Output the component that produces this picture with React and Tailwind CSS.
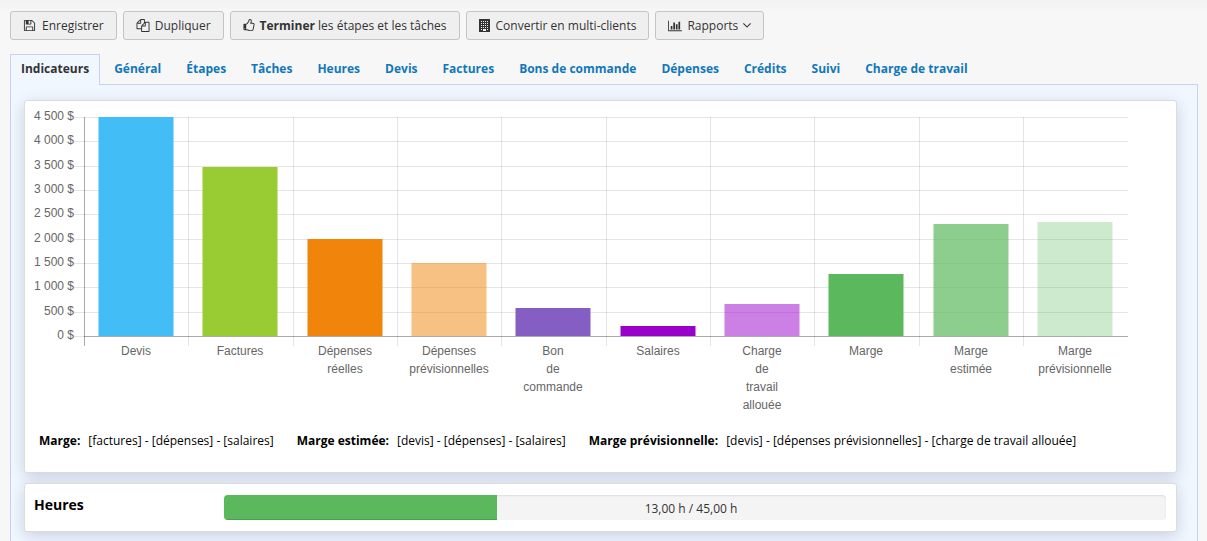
import React from "react";
import clsx from "clsx";

const tabs = [
    { name: "Indicateurs", path: "#indicateurs" },
    { name: "Général", path: "#general" },
    { name: "Étapes", path: "#etapes" },
    { name: "Tâches", path: "#taches" },
    { name: "Heures", path: "#heures" },
    { name: "Devis", path: "#devis" },
    { name: "Factures", path: "#factures" },
    { name: "Bons de commande", path: "#bons-de-commande" },
    { name: "Dépenses", path: "#depenses" },
    { name: "Crédits", path: "#credits" },
    { name: "Suivi", path: "#suivi" },
    { name: "Charge de travail", path: "#charge-de-travail" },
];

const bars = [
    { label: ["Devis"], value: 4500, color: "#42bdf5" },
    { label: ["Factures"], value: 3475, color: "#99cc33" },
    { label: ["Dépenses", "réelles"], value: 2000, color: "#f1840a" },
    { label: ["Dépenses", "prévisionnelles"], value: 1500, color: "#f1840a", opacity: 0.5 },
    { label: ["Bon", "de", "commande"], value: 575, color: "#845ec2" },
    { label: ["Salaires"], value: 200, color: "#9900cc" },
    { label: ["Charge", "de", "travail", "allouée"], value: 660, color: "#9900cc", opacity: 0.5 },
    { label: ["Marge"], value: 1275, color: "#5cb85c" },
    { label: ["Marge", "estimée"], value: 2300, color: "#5cb85c", opacity: 0.7 },
    { label: ["Marge", "prévisionnelle"], value: 2340, color: "#5cb85c", opacity: 0.3 },
];

const ticks = [
    { value: 4500, label: "4 500 $" },
    { value: 4000, label: "4 000 $" },
    { value: 3500, label: "3 500 $" },
    { value: 3000, label: "3 000 $" },
    { value: 2500, label: "2 500 $" },
    { value: 2000, label: "2 000 $" },
    { value: 1500, label: "1 500 $" },
    { value: 1000, label: "1 000 $" },
    { value: 500, label: "500 $" },
    { value: 0, label: "0 $" },
];

const formulas = [
    { name: "Marge:", text: "[factures] - [dépenses] - [salaires]" },
    { name: "Marge estimée:", text: "[devis] - [dépenses] - [salaires]" },
    {
        name: "Marge prévisionnelle:",
        text: "[devis] - [dépenses prévisionnelles] - [charge de travail allouée]",
    },
];

const SaveIcon = () => (
    <svg viewBox="0 0 1792 1792" className="h-[13px] w-[13px] fill-current" aria-hidden="true">
        <path d="M512 1536h768v-384h-768v384zm896 0h128v-896q0-14-10-38.5t-20-34.5l-281-281q-10-10-34-20t-39-10v416q0 40-28 68t-68 28h-576q-40 0-68-28t-28-68v-416h-128v1280h128v-416q0-40 28-68t68-28h832q40 0 68 28t28 68v416zm-384-928v-320q0-13-9.5-22.5t-22.5-9.5h-192q-13 0-22.5 9.5t-9.5 22.5v320q0 13 9.5 22.5t22.5 9.5h192q13 0 22.5-9.5t9.5-22.5zm640 32v928q0 40-28 68t-68 28h-1344q-40 0-68-28t-28-68v-1344q0-40 28-68t68-28h928q40 0 88 20t76 48l280 280q28 28 48 76t20 88z" />
    </svg>
);

const CopyIcon = () => (
    <svg viewBox="0 0 1792 1792" className="h-[13px] w-3.5 fill-current" aria-hidden="true">
        <path d="M1696 384q40 0 68 28t28 68v1216q0 40-28 68t-68 28h-960q-40 0-68-28t-28-68v-288h-544q-40 0-68-28t-28-68v-672q0-40 20-88t48-76l408-408q28-28 76-48t88-20h416q40 0 68 28t28 68v328q68-40 128-40h416zm-544 213l-299 299h299v-299zm-640-384l-299 299h299v-299zm196 647l316-316v-416h-384v416q0 40-28 68t-68 28h-416v640h512v-256q0-40 20-88t48-76zm956 804v-1152h-384v416q0 40-28 68t-68 28h-416v640h896z" />
    </svg>
);

const ThumbIcon = () => (
    <svg viewBox="128 0 1536 1792" className="h-[13px] w-3 fill-current" aria-hidden="true">
        <path d="M384 1344q0-26-19-45t-45-19-45 19-19 45 19 45 45 19 45-19 19-45zm1152-576q0-51-39-89.5t-89-38.5h-352q0-58 48-159.5t48-160.5q0-98-32-145t-128-47q-26 26-38 85t-30.5 125.5-59.5 109.5q-22 23-77 91-4 5-23 30t-31.5 41-34.5 42.5-40 44-38.5 35.5-40 27-35.5 9h-32v640h32q13 0 31.5 3t33 6.5 38 11 35 11.5 35.5 12.5 29 10.5q211 73 342 73h121q192 0 192-167 0-26-5-56 30-16 47.5-52.5t17.5-73.5-18-69q53-50 53-119 0-25-10-55.5t-25-47.5q32-1 53.5-47t21.5-81zm128-1q0 89-49 163 9 33 9 69 0 77-38 144 3 21 3 43 0 101-60 178 1 139-85 219.5t-227 80.5h-129q-96 0-189.5-22.5t-216.5-65.5q-116-40-138-40h-288q-53 0-90.5-37.5t-37.5-90.5v-640q0-53 37.5-90.5t90.5-37.5h274q36-24 137-155 58-75 107-128 24-25 35.5-85.5t30.5-126.5 62-108q39-37 90-37 84 0 151 32.5t102 101.5 35 186q0 93-48 192h176q104 0 180 76t76 179z" />
    </svg>
);

const BuildingIcon = () => (
    <svg viewBox="0 0 11 13" className="h-[13px] w-[11px] fill-current" aria-hidden="true">
        <path
            fillRule="evenodd"
            d="M.5 0h10a.5.5 0 0 1 .5.5v12a.5.5 0 0 1-.5.5h-10a.5.5 0 0 1-.5-.5v-12a.5.5 0 0 1 .5-.5zM2 2v1h1v-1zM4 2v1h1v-1zM6 2v1h1v-1zM8 2v1h1v-1zM2 4v1h1v-1zM4 4v1h1v-1zM6 4v1h1v-1zM8 4v1h1v-1zM2 6v1h1v-1zM4 6v1h1v-1zM6 6v1h1v-1zM8 6v1h1v-1zM2 8v1h1v-1zM4 8v1h1v-1zM6 8v1h1v-1zM8 8v1h1v-1zM2 10v1h1v-1zM8 10v1h1v-1zM4 10v2h3v-2z"
        />
    </svg>
);

const ChartIcon = () => (
    <svg viewBox="0 0 2048 1792" className="h-3 w-3.5 fill-current" aria-hidden="true">
        <path d="M640 896v512h-256v-512h256zm384-512v1024h-256v-1024h256zm1024 1152v128h-2048v-1536h128v1408h1920zm-640-896v768h-256v-768h256zm384-384v1152h-256v-1152h256z" />
    </svg>
);

const AngleDownIcon = () => (
    <svg viewBox="384 640 1024 640" className="h-[5px] w-2 fill-current" aria-hidden="true">
        <path d="M1395 736q0 13-10 23l-466 466q-10 10-23 10t-23-10l-466-466q-10-10-10-23t10-23l50-50q10-10 23-10t23 10l393 393 393-393q10-10 23-10t23 10l50 50q10 10 10 23z" />
    </svg>
);

const ToolbarButton = ({ className, children }) => (
    <button
        type="button"
        className={clsx(
            "flex h-[29px] items-center rounded-[3px] border border-[#c4c4c4] bg-[#efefef] px-3 text-[#333] hover:bg-[#e6e6e6]",
            className
        )}
    >
        {children}
    </button>
);

const Card = ({ className, children }) => (
    <section
        className={clsx(
            "rounded-[3px] border border-[#dcdcdc] bg-white shadow-[0_4px_16px_rgba(0,0,60,0.16)]",
            className
        )}
    >
        {children}
    </section>
);

const CHART = { left: 59, right: 1102.5, top: 16, bottom: 235, max: 4500 };
const STEP = (CHART.right - CHART.left) / bars.length;

const yOf = (value) =>
    Math.round(CHART.bottom - (value / CHART.max) * (CHART.bottom - CHART.top));
const xOf = (index) => Math.round(CHART.left + index * STEP);

const IndicatorChart = () => (
    <svg
        viewBox="0 0 1151 320"
        className="block h-auto w-full font-['Liberation_Sans',Arial,sans-serif] text-[12px]"
        role="img"
        aria-label="Indicateurs du projet"
    >
        {/* Grid */}
        <g shapeRendering="crispEdges">
            {ticks.map((tick) => (
                <rect
                    key={tick.value}
                    x={CHART.left - 10}
                    y={yOf(tick.value)}
                    width={CHART.right - CHART.left + 10}
                    height="1"
                    fillOpacity="0.1"
                />
            ))}
            {bars.map((bar, i) => (
                <rect
                    key={i}
                    x={xOf(i)}
                    y={CHART.top}
                    width="1"
                    height={CHART.bottom - CHART.top + 10}
                    fillOpacity="0.1"
                />
            ))}
        </g>

        {bars.map((bar, i) => (
            <rect
                key={i}
                x={xOf(i) + 14.5}
                y={yOf(bar.value)}
                width="75"
                height={CHART.bottom - yOf(bar.value)}
                fill={bar.color}
                fillOpacity={bar.opacity ?? 1}
            />
        ))}

        {/* Axes */}
        <g shapeRendering="crispEdges" fillOpacity="0.25">
            <rect x={CHART.left} y={CHART.top} width="1" height={CHART.bottom - CHART.top + 10} />
            <rect x={CHART.left} y={CHART.bottom} width={CHART.right - CHART.left} height="1" />
        </g>

        <g fill="#666">
            {ticks.map((tick) => (
                <text key={tick.value} x="49" y={yOf(tick.value) + 3} textAnchor="end">
                    {tick.label}
                </text>
            ))}
            {bars.map((bar, i) =>
                bar.label.map((line, row) => (
                    <text
                        key={`${i}-${row}`}
                        x={xOf(i) + 52}
                        y={254 + row * 18}
                        textAnchor="middle"
                    >
                        {line}
                    </text>
                ))
            )}
        </g>
    </svg>
);

const HoursProgress = ({ done, total }) => {
    const format = (n) => n.toFixed(2).replace(".", ",");

    return (
        <div
            role="progressbar"
            aria-label="Heures"
            aria-valuemin={0}
            aria-valuemax={total}
            aria-valuenow={done}
            className="relative h-[25px] flex-1 overflow-hidden rounded bg-[#f4f4f4] shadow-[inset_0_1px_2px_rgba(0,0,0,0.1)]"
        >
            <div
                className="h-full bg-[#5cb85c] shadow-[inset_0_-1px_0_rgba(0,0,0,0.15)]"
                style={{ width: `${Math.ceil((done / total) * 100)}%` }}
            />
            <span className="absolute inset-0 flex items-center justify-center pt-0.5 pr-2 text-[#333]">
                {format(done)} h / {format(total)} h
            </span>
        </div>
    );
};

const App = () => {
    const [active, setActive] = React.useState("Indicateurs");

    return (
        <div className="min-h-screen overflow-hidden bg-[#f7f7f7] bg-linear-to-b from-[#f2f2f2] to-[#f7f7f7] to-[12px] pt-[11px] pr-[9px] pl-2.5 font-['Open_Sans',sans-serif] text-[12px] leading-4">
            {/* Toolbar */}
            <div className="flex flex-wrap gap-1.5">
                <ToolbarButton className="gap-1.5">
                    <SaveIcon /> Enregistrer
                </ToolbarButton>
                <ToolbarButton className="gap-[5px]">
                    <CopyIcon /> Dupliquer
                </ToolbarButton>
                <ToolbarButton className="gap-[5px]">
                    <ThumbIcon />
                    <span>
                        <b>Terminer</b> les étapes et les tâches
                    </span>
                </ToolbarButton>
                <ToolbarButton className="gap-1.5">
                    <BuildingIcon /> Convertir en multi-clients
                </ToolbarButton>
                <ToolbarButton className="gap-[5px]">
                    <ChartIcon /> Rapports <AngleDownIcon />
                </ToolbarButton>
            </div>

            {/* Tabs */}
            <nav className="relative mt-3.5 flex flex-wrap gap-[3px]">
                {tabs.map((tab) => (
                    <a
                        key={tab.name}
                        href={tab.path}
                        onClick={() => setActive(tab.name)}
                        className={clsx(
                            "-mb-px h-[31px] border border-b-0 px-2.5 pt-1.5 font-bold",
                            active === tab.name
                                ? "border-[#c8d0f4] bg-[#f0f7ff] text-[#333]"
                                : "border-transparent text-[#1177bb] hover:underline"
                        )}
                    >
                        {tab.name}
                    </a>
                ))}
            </nav>

            <main className="border border-b-0 border-[#c8d0f4] bg-[#f0f7ff] pt-[15px] pr-5 pb-5 pl-[13px]">
                <Card>
                    <IndicatorChart />
                    <div className="flex flex-wrap gap-x-[23px] px-3.5 pt-3 pb-[23px] text-black">
                        {formulas.map((formula) => (
                            <p key={formula.name} className="flex gap-2">
                                <b>{formula.name}</b>
                                <span>{formula.text}</span>
                            </p>
                        ))}
                    </div>
                </Card>

                <Card className="mt-2.5 flex items-start py-[11px] pr-2.5 pl-[9px]">
                    <h2 className="w-[190px] text-[14px] leading-5 font-bold text-black">Heures</h2>
                    <HoursProgress done={13} total={45} />
                </Card>
            </main>
        </div>
    );
};

export default App;
